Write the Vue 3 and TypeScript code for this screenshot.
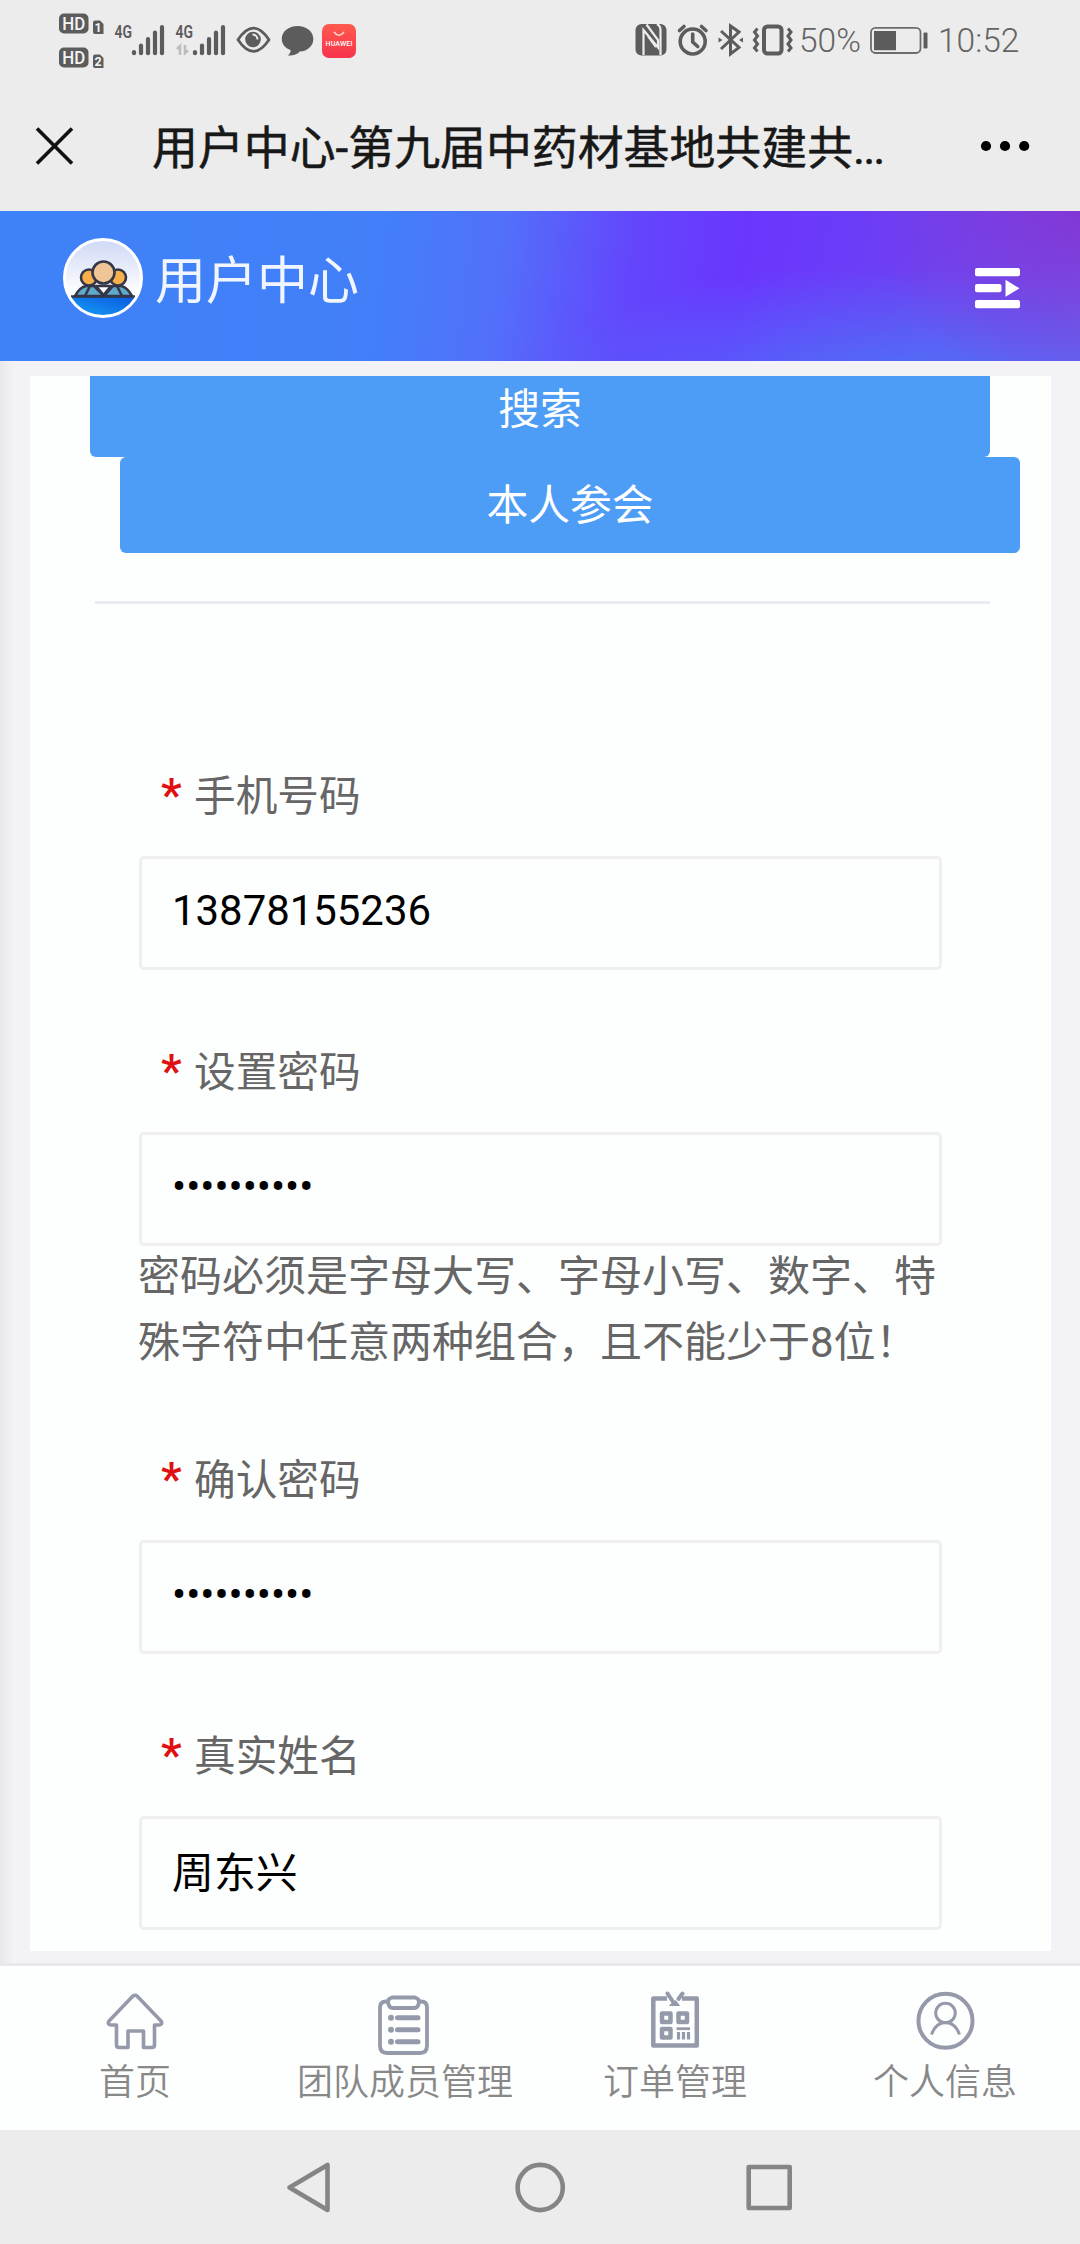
<script setup lang="ts">
interface Field {
  label: string
  value: string
  cjk?: boolean
  hint?: string
}

const fields: Field[] = [
  { label: '手机号码', value: '13878155236' },
  {
    label: '设置密码',
    value: '••••••••••',
    hint: '密码必须是字母大写、字母小写、数字、特殊字符中任意两种组合，且不能少于8位！',
  },
  { label: '确认密码', value: '••••••••••' },
  { label: '真实姓名', value: '周东兴', cjk: true },
]

const barX = [134, 141, 148, 155, 162]
const barTop = [50, 43.5, 37, 30.5, 25]
</script>

<template>
  <div class="screen">
    <div class="status">
      <svg class="hd" width="50" height="80" viewBox="56 0 50 80">
        <g v-for="n in 2" :key="n" :transform="`translate(0 ${(n - 1) * 34})`">
          <rect x="59" y="13.5" width="29.5" height="20" rx="5" fill="#5c5c5c" />
          <text x="73.7" y="29.8" text-anchor="middle" textLength="23" lengthAdjust="spacingAndGlyphs" font-size="18" font-weight="500" fill="#f4f4f4">HD</text>
          <path d="M93 22.500q0-2 2-2h5l3.500 3.500v10h-8.500q-2 0-2-2z" fill="#5c5c5c" />
          <text x="98.200" y="32" text-anchor="middle" font-size="12.500" font-weight="700" fill="#f4f4f4">{{ n }}</text>
        </g>
      </svg>
      <svg width="61" height="80" viewBox="106 0 61 80">
        <text x="114.500" y="38" textLength="17.500" lengthAdjust="spacingAndGlyphs" font-size="18.500" font-weight="600" fill="#5c5c5c">4G</text>
        <path v-for="(x, i) in barX" :key="x" :d="`M${x} ${barTop[i] + 2}V53.2`" stroke="#5c5c5c" stroke-width="4.200" stroke-linecap="round" />
      </svg>
      <svg width="61" height="80" viewBox="106 0 61 80">
        <text x="114.500" y="38" textLength="17.500" lengthAdjust="spacingAndGlyphs" font-size="18.500" font-weight="600" fill="#5c5c5c">4G</text>
        <path d="M116 49l3-3v9M124 45v8l3-2.500" fill="none" stroke="#bdbdbd" stroke-width="2.500" />
        <path v-for="(x, i) in barX" :key="x" :d="`M${x} ${barTop[i] + 2}V53.2`" stroke="#5c5c5c" stroke-width="4.200" stroke-linecap="round" />
      </svg>
      <svg width="50" height="80" viewBox="228 0 50 80">
        <path d="M238 39.700Q253.500 16.500 269 39.700Q253.500 62.900 238 39.700z" fill="none" stroke="#5c5c5c" stroke-width="2.800" stroke-linejoin="round" />
        <circle cx="253" cy="39.500" r="7.800" fill="#5c5c5c" />
        <path d="M252.500 34.500a5 5 0 0 1 5 5" fill="none" stroke="#ededed" stroke-width="2" />
      </svg>
      <svg width="80" height="80" viewBox="278 0 80 80">
        <path d="M297.500 26c9 0 15.800 5.500 15.800 13s-6.800 12.600-13.500 12.600c-2.500 3-7 4.200-12 3.800 2-1.500 3-3.400 2.800-5.400-5.500-2-8.800-6-8.800-11C281.800 31.500 288.500 26 297.500 26z" fill="#5c5c5c" />
        <defs>
          <linearGradient id="hw" x1="0" y1="0" x2="0" y2="1">
            <stop offset="0" stop-color="#ff5a4e" />
            <stop offset="1" stop-color="#f8334d" />
          </linearGradient>
        </defs>
        <rect x="322" y="24" width="34" height="34" rx="7" fill="url(#hw)" />
        <path d="M334 32q5 6.500 10 0" fill="none" stroke="#ffd9d4" stroke-width="1.500" />
        <text x="339" y="46.200" text-anchor="middle" textLength="27" font-size="7" font-weight="500" fill="#fff">HUAWEI</text>
      </svg>
      <div class="gap"></div>
      <svg width="40" height="80" viewBox="632 0 40 80">
        <rect x="635.500" y="24" width="31" height="31.500" rx="6" fill="#5c5c5c" />
        <path d="M643.500 55V30l14.500 17.500V40L646.500 24.500M657 24q3.500 2 3.500 6v25M656 47L648 36" fill="none" stroke="#ededed" stroke-width="2.200" />
      </svg>
      <svg width="40" height="80" viewBox="672 0 40 80">
        <g fill="none" stroke="#5c5c5c" stroke-width="3.600" stroke-linecap="round" stroke-linejoin="round">
          <circle cx="692.700" cy="41.500" r="12.500" />
          <path d="M692.700 34v8l5 4.500M679.500 30.500l4.500-4M706 30.500l-4.500-4" />
        </g>
      </svg>
      <svg width="38" height="80" viewBox="712 0 38 80">
        <path d="M721 31l18 16.500-8.500 6.500V26l8.500 6L721 49" fill="none" stroke="#5c5c5c" stroke-width="3" />
        <path d="M718.500 37.500l4 2.500-4 2.500zM743 37.500l-4 2.500 4 2.500z" fill="#5c5c5c" />
      </svg>
      <svg width="50" height="80" viewBox="750 0 50 80">
        <rect x="764" y="26.500" width="17.500" height="27" rx="3.500" fill="none" stroke="#5c5c5c" stroke-width="4" />
        <path d="M757.500 28.500l-3 3.500 3 4-3 4 3 4-3 4 3 3.500M788 28.500l3 3.500-3 4 3 4-3 4 3 4-3 3.500" fill="none" stroke="#5c5c5c" stroke-width="3" />
      </svg>
      <span class="pct">50%</span>
      <svg width="64" height="80" viewBox="867 0 64 80">
        <rect x="871" y="27.800" width="49.500" height="25.200" rx="4.500" fill="none" stroke="#6c6c6c" stroke-width="1.800" />
        <rect x="874" y="31" width="22" height="19.200" fill="#5c5c5c" />
        <rect x="923.500" y="32.500" width="4" height="16" rx="1" fill="#5c5c5c" />
      </svg>
      <span class="time">10:52</span>
    </div>

    <div class="titlebar">
      <svg width="40" height="40" viewBox="0 0 40 40">
        <path d="M2 2.500L37 37.500M37 2.500L2 37.500" stroke="#111" stroke-width="3.600" />
      </svg>
      <h1>用户中心-第九届中药材基地共建共<span>...</span></h1>
      <svg class="more" width="50" height="12" viewBox="0 0 50 12">
        <circle cx="6" cy="6" r="5.100" /><circle cx="25" cy="6" r="5.100" /><circle cx="44.200" cy="6" r="5.100" />
      </svg>
    </div>

    <header class="banner">
      <svg class="logo" width="84" height="84" viewBox="0 0 84 84">
        <defs>
          <linearGradient id="sky" x1="0" y1="0" x2="0" y2="1">
            <stop offset="0" stop-color="#cfd8f6" />
            <stop offset=".7" stop-color="#ffffff" />
          </linearGradient>
          <linearGradient id="sea" x1="0" y1="1" x2="1" y2="0">
            <stop offset=".2" stop-color="#159bf2" />
            <stop offset="1" stop-color="#0a50e0" />
          </linearGradient>
          <clipPath id="disc"><circle cx="42" cy="42" r="38" /></clipPath>
        </defs>
        <circle cx="42" cy="42" r="38.500" fill="url(#sky)" />
        <g clip-path="url(#disc)">
          <rect x="0" y="60" width="84" height="24" fill="url(#sea)" />
          <g stroke="#343747" stroke-width="2.600" stroke-linejoin="round">
            <path d="M14 60q5-9 11-10h8l10 10zM71 60q-5-9-11-10h-8L43 60z" fill="#5fa9cc" />
            <path d="M29 50l-5 10M56 50l5 10" fill="none" />
            <circle cx="28" cy="41.500" r="8" fill="#f7b04c" />
            <circle cx="57" cy="41.500" r="8" fill="#f7b04c" />
            <path d="M35 50l7.500 9 7.500-9z" fill="#fff" />
            <circle cx="42.500" cy="36.500" r="11" fill="#f0c596" />
            <path d="M10 60.500h64" />
          </g>
        </g>
        <circle cx="42" cy="42" r="38.500" fill="none" stroke="#fff" stroke-width="3" />
      </svg>
      <span class="brand">用户中心</span>
      <svg class="menu" width="46" height="42" viewBox="0 0 46 42" fill="#fff">
        <rect x="0" y="0" width="45" height="8.200" rx="2" />
        <rect x="0" y="16" width="26.500" height="8.200" rx="2" />
        <path d="M30.500 11.800v17L44.500 20.300z" />
        <rect x="0" y="32" width="45" height="8.200" rx="2" />
      </svg>
    </header>

    <main class="page">
      <section class="card">
        <button class="btn search">搜索</button>
        <button class="btn self">本人参会</button>
        <hr />
        <form>
          <div v-for="f in fields" :key="f.label" class="field">
            <label><i>*</i>{{ f.label }}</label>
            <div class="input" :class="{ cjk: f.cjk }">{{ f.value }}</div>
            <p v-if="f.hint">{{ f.hint }}</p>
          </div>
        </form>
      </section>
    </main>

    <nav class="tabs">
      <a>
        <svg width="60" height="64" viewBox="105 1990 60 64" fill="none" stroke="#959aaa" stroke-width="3.600" stroke-linejoin="round">
          <path d="M132 1996Q135 1992.500 138 1996L161 2020Q163 2023.500 159 2024H154.500V2044Q154.500 2046.500 152 2046.500H143.500V2030H128V2046.500H119Q116.500 2046.500 116.500 2044V2024H111Q107 2023.500 109 2020Z" />
        </svg>
        <span>首页</span>
      </a>
      <a>
        <svg width="60" height="64" viewBox="375 1990 60 64" fill="none" stroke="#959aaa" stroke-width="3.800" stroke-linecap="round" stroke-linejoin="round">
          <path d="M388 2000.500h-2q-6 0-6 6v38q0 7.500 7 7.500h33q7 0 7-7.500v-38q0-6-6-6h-2" />
          <path d="M392 1996.500h23q4 1 4 4.500-.5 5.500-4.500 6h-22q-4-.5-4.500-6 0-3.500 4-4.500z" />
          <path d="M397.500 2016.800h20.500M397.500 2028.700h20.500M397.500 2040.700h20.500" stroke-width="5" />
          <path d="M391 2016.800h0M391 2028.700h0M391 2040.700h0" stroke-width="6" />
        </svg>
        <span>团队成员管理</span>
      </a>
      <a>
        <svg width="60" height="64" viewBox="645 1990 60 64" fill="none" stroke="#959aaa" stroke-width="4.500" stroke-linejoin="round">
          <path d="M667 1997.500H653.300V2044.500H696.800V1997.500H682" />
          <path d="M667.500 1992.500L674.500 2003M682.500 1992.500L678.500 1998" stroke-width="4" stroke-linecap="round" />
          <path d="M669.500 2004.500h10l-4-5z" fill="#959aaa" stroke-width="1" />
          <path d="M662 2012.500h8.500v8.500H662zM678.500 2012.500h8.500v8.500h-8.500zM662 2028h8.500v8.500H662z" />
          <path d="M676.500 2027.700h13.500" stroke-width="2.800" />
          <path d="M678.500 2031v7.500M683.500 2031v7.500M688.500 2031v7.500" stroke-width="3.200" />
        </svg>
        <span>订单管理</span>
      </a>
      <a>
        <svg width="60" height="64" viewBox="915 1989 60 64" fill="none" stroke="#959aaa">
          <circle cx="945.500" cy="2018.700" r="27" stroke-width="4" />
          <circle cx="945.500" cy="2011" r="9.800" stroke-width="3" />
          <path d="M931.500 2032.500Q936 2020.500 945.500 2020.500T959.500 2032.500" stroke-width="3" />
        </svg>
        <span>个人信息</span>
      </a>
    </nav>

    <div class="sysnav">
      <svg width="520" height="56" viewBox="280 2155 520 56" fill="none" stroke="#858585" stroke-width="4.600" stroke-linejoin="round">
        <path d="M289.500 2183.500L327.500 2161V2206Z" />
        <circle cx="540.200" cy="2183.500" r="22.600" />
        <rect x="748.700" y="2163" width="41" height="41" />
      </svg>
    </div>
  </div>
</template>

<style>
body {
  margin: 0;
  background: #ededed;
}
</style>

<style scoped>
.screen {
  width: 1080px;
  height: 2244px;
  display: flex;
  flex-direction: column;
  overflow: hidden;
  background: #ececec;
  font-family: Roboto, 'Noto Sans CJK SC', sans-serif;
}
svg {
  display: block;
  flex: none;
}
.status {
  height: 80px;
  display: flex;
  padding-left: 56px;
  box-sizing: border-box;
}
.gap {
  width: 274px;
}
.pct,
.time {
  font-size: 33.5px;
  line-height: 80px;
  color: #646464;
  white-space: nowrap;
  height: 80px;
  font-weight: 350;
  margin-top: 1px;
}
.pct {
  width: 68px;
  margin-left: -1px;
}
.time {
  margin-left: 7px;
}
.titlebar {
  height: 131px;
  display: flex;
  align-items: center;
  padding: 0 50px 0 35px;
  box-sizing: border-box;
}
.titlebar h1 {
  flex: 1;
  margin: 4px 0 0 77px;
  font-size: 45.9px;
  font-weight: 400;
  -webkit-text-stroke: 0.5px #181818;
  line-height: 60px;
  color: #181818;
  white-space: nowrap;
}
.titlebar h1 span {
  letter-spacing: -2px;
}
.banner {
  height: 150px;
  flex: none;
  display: flex;
  align-items: center;
  padding: 0 59px 0 61px;
  box-sizing: border-box;
  background:
    radial-gradient(ellipse 230px 190px at 1090px -10px, rgba(134, 48, 210, 0.9), rgba(125, 50, 230, 0)),
    radial-gradient(ellipse 360px 120px at 890px 175px, rgba(74, 120, 248, 0.9), rgba(80, 110, 250, 0)),
    linear-gradient(97deg, #3f82f8 0%, #427ff8 35%, #5270fa 46%, #6346fc 58%, #6a36fe 68%, #6c3ff5 82%, #6f5aec 100%);
}
.logo {
  margin-top: -16px;
}
.brand {
  margin: -9px 0 0 10px;
  font-size: 51px;
  line-height: 70px;
  font-weight: 400;
  color: #f0f5ff;
}
.menu {
  margin: 6px 0 0 auto;
}
.page {
  height: 1602px;
  flex: none;
  padding: 15px 29px 12px 30px;
  box-sizing: border-box;
  background: linear-gradient(90deg, #e9e9ec 0, #f3f3f7 14px, #f3f3f7 100%);
}
.card {
  height: 1575px;
  overflow: hidden;
  background: #fdfefe;
}
.btn {
  display: block;
  width: 900px;
  height: 96px;
  padding: 2px 0 0;
  border: 0;
  border-radius: 6px;
  background: #4d9df6;
  color: #fff;
  font: 400 41.8px/94px Roboto, 'Noto Sans CJK SC', sans-serif;
}
.search {
  margin: -15px 0 0 60px;
}
.self {
  margin-left: 90px;
}
hr {
  width: 895px;
  height: 3px;
  margin: 48px 0 0 65px;
  border: 0;
  background: #e9ecf2;
}
form {
  padding: 90px 109px 0 109px;
}
.field label {
  display: flex;
  height: 162px;
  padding-left: 22px;
  box-sizing: border-box;
  font-size: 41.7px;
  line-height: 206px;
  color: #666;
}
.field label i {
  width: 33px;
  font-size: 46px;
  font-style: normal;
  font-weight: 600;
  line-height: 203px;
  color: #e01010;
}
.input {
  height: 114px;
  padding-left: 30px;
  box-sizing: border-box;
  border: 3px solid #efeff1;
  border-radius: 5px;
  font-size: 41.9px;
  line-height: 104px;
  color: #000;
}
.input.cjk {
  line-height: 109px;
}
.field p {
  position: relative;
  top: -2px;
  margin: 0 -4px 0 -1px;
  height: 132px;
  font-size: 42px;
  line-height: 66px;
  color: #666;
}
.tabs {
  height: 167px;
  flex: none;
  display: flex;
  border-top: 3px solid #e8e9ed;
  box-sizing: border-box;
  background: #fdfefe;
}
.tabs a {
  width: 270px;
  display: flex;
  flex-direction: column;
  align-items: center;
  padding-top: 25px;
}
.tabs span {
  margin-top: 3px;
  font-size: 36px;
  line-height: 50px;
  color: #888;
  font-weight: 350;
}
.sysnav {
  flex: 1;
  display: flex;
  align-items: center;
  justify-content: center;
  background: #ececed;
}
</style>
